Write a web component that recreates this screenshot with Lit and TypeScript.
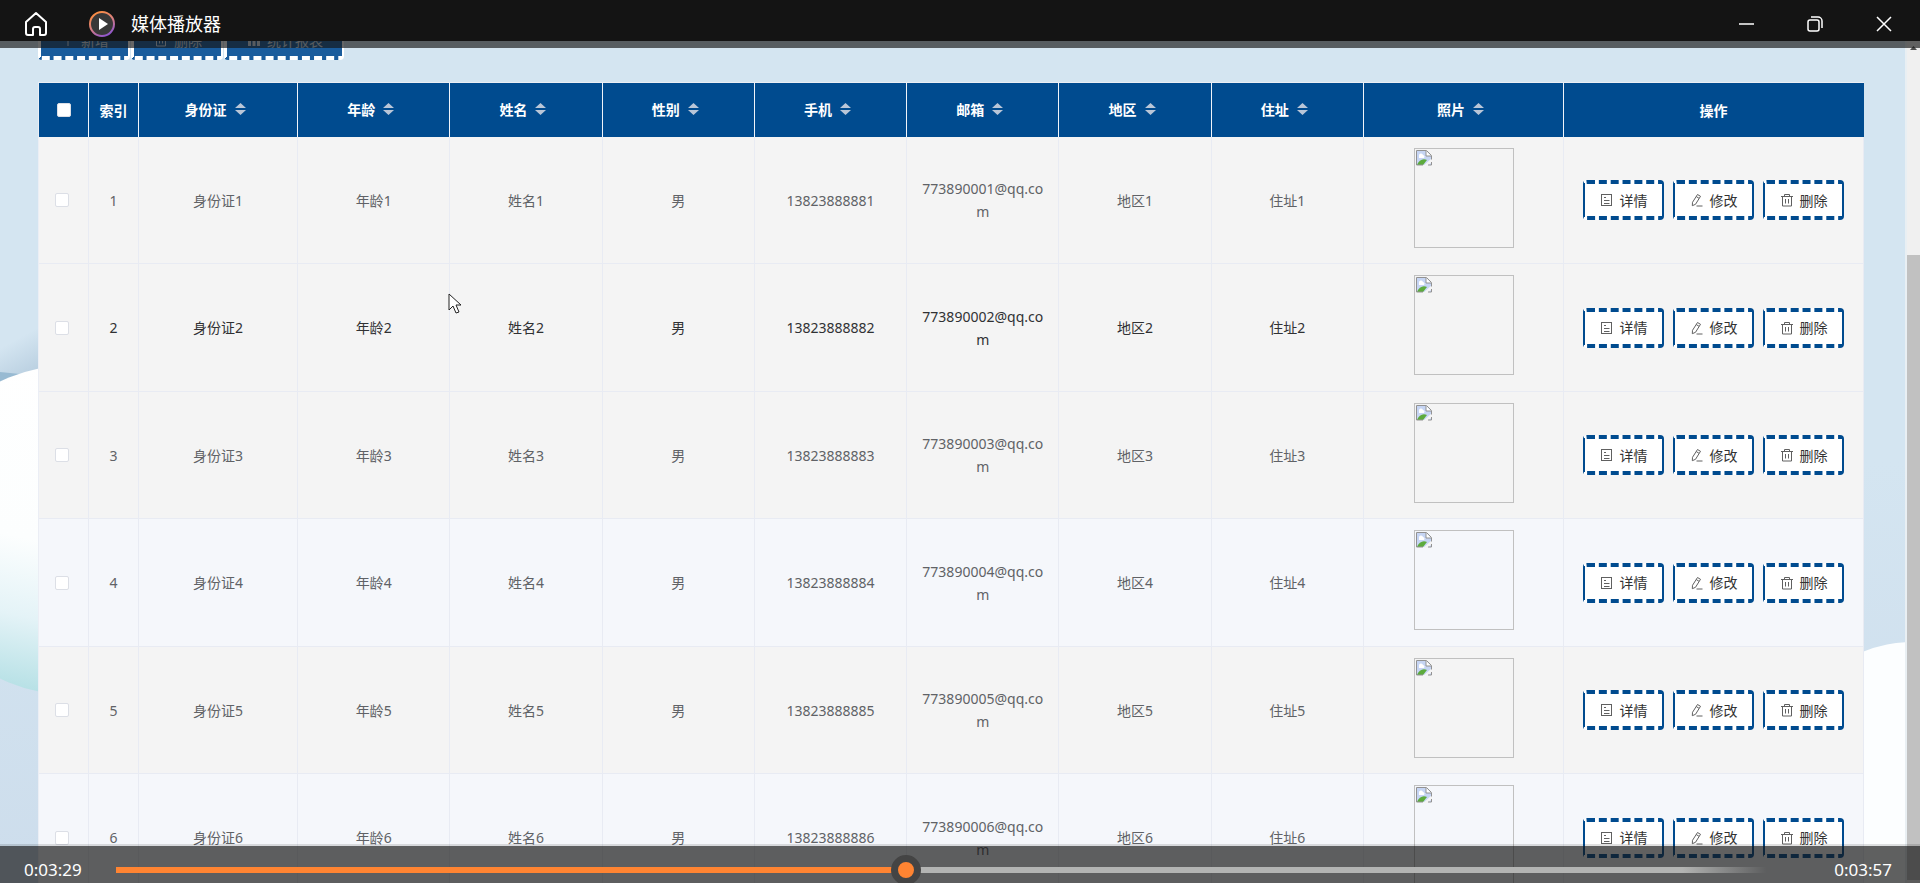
import { LitElement, html, css, svg } from "lit";
import { customElement } from "lit/decorators.js";

interface Person {
  id: number;
  gender: string;
}

const people: Person[] = [1, 2, 3, 4, 5, 6].map((id) => ({ id, gender: "男" }));
const sortable = ["身份证", "年龄", "姓名", "性别", "手机", "邮箱", "地区", "住址", "照片"];

const icons = {
  detail: svg`<rect x="1.5" y="1.5" width="10" height="11"/><path d="M4 4.500h2M4 7.500h5.500M4 10.500h5.500"/>`,
  edit: svg`<path d="M7.500 1.500l3 1.800-5 8-3.200 1.400.2-3.400zM6.300 3.600l2.600 1.600M6.500 13h6"/>`,
  remove: svg`<path d="M1 3.500h12M4.500 3.500v-2h5v2M2.500 3.500v9.500h9v-9.500M5.500 6v4.500M8.500 6v4.500"/>`,
  add: svg`<path d="M7 1v12M1 7h12"/>`,
  chart: svg`<path stroke-width="3" d="M2.500 5v8M7 2v11M11.500 4v9"/>`,
};

const icon = (shape: unknown) => html`<svg class="icon" viewBox="0 0 14 14" aria-hidden="true">${shape}</svg>`;

@customElement("data-page")
class DataPage extends LitElement {
  static styles = css`
    :host {
      display: grid;
      grid-template: minmax(0, 1fr) / minmax(0, 1fr) 15px;
      overflow: hidden;
      background: linear-gradient(#d4e5f1, #d4e5f1 50%, #cdddec);
      color: #606266;
      font: 14px/23px "Noto Sans", "Noto Sans CJK SC", sans-serif;
    }
    .backdrop { grid-area: 1 / 1; display: flex; justify-content: space-between; }
    .backdrop svg { height: 843px; width: 60px; }
    .content { grid-area: 1 / 1; z-index: 1; padding: 0 41px 0 38px; }
    .toolbar { display: flex; height: 19px; align-items: flex-end; gap: 1px; margin-bottom: 22px; }
    button {
      box-sizing: border-box;
      display: inline-flex;
      align-items: center;
      justify-content: center;
      gap: 6px;
      height: 40px;
      border: 2px solid #004b8f;
      border-width: 4px 2px;
      border-style: dashed solid;
      border-radius: 4px;
      background: #fff;
      color: #333;
      font: inherit;
      white-space: nowrap;
    }
    .tool { border-color: #fff; border-left-width: 3px; background: #1a5c9c; color: #d5e0ea; padding: 0 19px 0 20px; }
    .icon { width: 14px; height: 14px; fill: none; stroke: currentColor; stroke-width: 1; flex: none; }
    table { width: 100%; border-collapse: separate; border-spacing: 0; table-layout: fixed; text-align: center; border-left: 1px solid #ebeef5; border-top: 1px solid #ebeef5; }
    .w-small { width: 50px; }
    .w-id { width: 159px; }
    .w-photo { width: 200px; }
    .w-ops { width: 300px; }
    th, td { box-sizing: border-box; padding: 0 12px; border-right: 1px solid #e8ebf3; vertical-align: middle; }
    th { height: 54px; background: #004b8f; border-color: #f0f4fa; color: #fff; font-weight: 700; }
    th:last-child { border-color: #004b8f; }
    .narrow { padding: 0; }
    .label { display: flex; align-items: center; justify-content: center; gap: 8px; padding: 0 6px 2px 0; }
    .sort { width: 11px; height: 12px; fill: #b9c6d8; }
    td { height: 127px; border-bottom: 1px solid #e8ebf3; background: #f4f4f4; word-break: break-all; }
    tr:nth-child(even) td { height: 128px; }
    .striped td { background: #f5f7fb; }
    .hovered td { color: #303133; }
    input { appearance: none; box-sizing: border-box; display: block; width: 14px; height: 14px; margin: 0 auto; border: 1px solid #dcdfe6; border-radius: 2px; background: #fff; }
    .check { padding: 0 4px 0 0; }
    .all { padding: 0; }
    .photo { box-sizing: border-box; display: block; width: 100px; height: 100px; margin: 0 auto 5px; border: 1px solid #c0c0c0; padding: 1px; }
    .photo svg { display: block; width: 16px; height: 16px; }
    .ops { display: flex; justify-content: center; gap: 9px; }
    .ops button { width: 81px; padding: 0; }
    .ops .icon { stroke: #606060; }
    .scroll { grid-area: 1 / 2; display: flex; flex-direction: column; background: #f0f0f0; border-left: 2px solid #e9eff3; }
    .arrow { height: 9px; width: 7px; margin: 0 auto; fill: #505050; }
    .thumb { flex: 1; margin: 205px 0 3px; background: #c1c1c1; }
  `;

  render() {
    return html`
      <div class="backdrop" aria-hidden="true">
        <svg viewBox="0 0 60 843">
          <defs>
            <linearGradient id="ball" x1="0.600" y1="0" x2="0.400" y2="1">
              <stop offset="0" stop-color="#fff"/><stop offset="0.550" stop-color="#fcfefe"/>
              <stop offset="0.780" stop-color="#e4f3f7"/><stop offset="1" stop-color="#b5e0e5"/>
            </linearGradient>
            <linearGradient id="shade" x1="0" y1="0" x2="0.600" y2="1">
              <stop offset="0.300" stop-color="#b4cbdd" stop-opacity="0"/><stop offset="1" stop-color="#b4cbdd"/>
            </linearGradient>
          </defs>
          <path d="M0 285h60v55H0z" fill="url(#shade)"/>
          <path d="M0 331L30 334L0 350z" fill="#98bad2"/>
          <circle cx="72" cy="489" r="165" fill="url(#ball)"/>
        </svg>
        <svg viewBox="0 0 60 843"><circle cx="67" cy="729" r="128" fill="#fcfeff"/></svg>
      </div>
      <div class="content">
        <div class="toolbar">
          <button class="tool">${icon(icons.add)}新增</button>
          <button class="tool">${icon(icons.remove)}删除</button>
          <button class="tool">${icon(icons.chart)}统计报表</button>
        </div>
        <table>
          <colgroup>
            <col class="w-small"><col class="w-small"><col class="w-id">
            <col><col><col><col><col><col><col>
            <col class="w-photo"><col class="w-ops">
          </colgroup>
          <thead>
            <tr>
              <th class="all"><input type="checkbox" aria-label="全选"></th>
              <th class="narrow">索引</th>
              ${sortable.map((name) => html`<th><span class="label">${name}
                <svg class="sort" viewBox="0 0 11 12" aria-hidden="true"><path d="M0 5L5.500 0L11 5zM0 7h11L5.500 12z"/></svg></span></th>`)}
              <th>操作</th>
            </tr>
          </thead>
          <tbody>${people.map((p) => this.row(p))}</tbody>
        </table>
      </div>
      <div class="scroll" aria-hidden="true">
        <svg class="arrow" viewBox="0 0 7 9"><path d="M0 9L3.500 5L7 9z"/></svg>
        <div class="thumb"></div>
      </div>`;
  }

  private row({ id, gender }: Person) {
    const state = id === 2 ? "hovered" : id > 3 && id % 2 === 0 ? "striped" : "";
    return html`
      <tr class=${state}>
        <td class="check"><input type="checkbox" aria-label="选择第${id}行"></td>
        <td class="narrow">${id}</td>
        <td>身份证${id}</td>
        <td>年龄${id}</td>
        <td>姓名${id}</td>
        <td>${gender}</td>
        <td>1382388888${id}</td>
        <td>77389000${id}@qq.com</td>
        <td>地区${id}</td>
        <td>住址${id}</td>
        <td>
          <div class="photo">
            <svg viewBox="0 0 16 16" role="img" aria-label="照片">
              <path d="M1 1h9l5 5v9H1z" fill="#c6d5f4"/>
              <path d="M3 6a2 2 0 0 1 4-1a2 2 0 0 1 1 3H3z" fill="#fff"/>
              <path d="M1 15c2-5 6-7 10-5l-4 5z" fill="#5cab3c"/>
              <path d="M7 16L16 8v4l-4 4z" fill="#f4f4f4"/>
              <path d="M10 1v5h5" fill="#fff" stroke="#929292"/>
              <path d="M7 15H.500V.500h10l5 5v4M12 15h3.500v-3" fill="none" stroke="#929292"/>
            </svg>
          </div>
        </td>
        <td>
          <div class="ops">
            <button>${icon(icons.detail)}详情</button>
            <button>${icon(icons.edit)}修改</button>
            <button>${icon(icons.remove)}删除</button>
          </div>
        </td>
      </tr>`;
  }
}

@customElement("app-root")
class AppRoot extends LitElement {
  static styles = css`
    :host {
      display: grid;
      grid-template: 41px minmax(0, 1fr) / minmax(0, 1fr);
      height: 100vh;
      position: relative;
      overflow: hidden;
      color: #fff;
      font: 18px/24px "Noto Sans", "Noto Sans CJK SC", sans-serif;
    }
    header { display: flex; align-items: center; background: #141414; padding: 7px 24px 0; box-sizing: border-box; z-index: 2; }
    header svg { display: block; fill: none; stroke: #fff; }
    .home, .logo { height: 26px; }
    .home { width: 24px; margin-right: 40px; }
    .logo { width: 28px; margin-right: 15px; }
    h1 { flex: 1; margin: 0; font: inherit; }
    .window { display: flex; gap: 37px; margin-right: -4px; }
    button { width: 32px; height: 32px; padding: 8px; border: 0; background: none; }
    .window svg { width: 16px; height: 16px; stroke-width: 1.500; }
    .edge { position: absolute; left: 0; right: 0; top: 41px; height: 7px; background: rgba(20, 20, 20, 0.65); z-index: 2; }
    footer {
      position: absolute; left: 0; right: 0; bottom: 0; z-index: 2;
      box-sizing: border-box; height: 39px; padding: 11px 28px 0 24px;
      border-top: 2px solid rgba(0, 0, 0, 0.120);
      display: flex; align-items: center; gap: 34px;
      background: rgba(20, 20, 20, 0.680); background-clip: padding-box;
      font-size: 17px;
    }
    input {
      appearance: none; flex: 1; min-width: 0; height: 30px; margin: 0; border-radius: 3px;
      background: linear-gradient(90deg, #ff8432 47%, #b3b4b3 47%, #b3b4b3 93%, transparent 98%) center / 100% 6px no-repeat;
    }
    input::-webkit-slider-thumb { appearance: none; box-sizing: border-box; width: 30px; height: 30px; border: 7px solid #444; border-radius: 50%; background: #ff8432; }
    .cursor { position: absolute; left: 448px; top: 293px; width: 14px; height: 21px; z-index: 1; fill: #fff; stroke: #222; }
  `;

  render() {
    return html`
      <header>
        <svg class="home" viewBox="0 0 24 26" stroke-width="2" stroke-linejoin="round">
          <path d="M2 11L12 2l10 9v11a2 2 0 0 1-2 2h-4v-6a2 2 0 0 0-2-2h-3a2 2 0 0 0-2 2v6H4a2 2 0 0 1-2-2z"/>
        </svg>
        <svg class="logo" viewBox="0 0 28 26">
          <defs><linearGradient id="ring" x1="0.200" y1="0" x2="0.700" y2="1">
            <stop offset="0" stop-color="#ff8e3c"/><stop offset="0.500" stop-color="#d98080"/><stop offset="1" stop-color="#8d55d0"/>
          </linearGradient></defs>
          <circle cx="14" cy="13" r="12" fill="#383838" stroke="url(#ring)" stroke-width="2"/>
          <path d="M11 7v12l9-6z" fill="#fff" stroke="none"/>
        </svg>
        <h1>媒体播放器</h1>
        <div class="window">
          <button aria-label="最小化"><svg viewBox="0 0 16 16"><path d="M1 8h15"/></svg></button>
          <button aria-label="还原"><svg viewBox="0 0 16 16"><rect x="1" y="4" width="11" height="11" rx="2"/><path d="M4 1h7a4 4 0 0 1 4 4v7"/></svg></button>
          <button aria-label="关闭"><svg viewBox="0 0 16 16"><path d="M1 1l14 14M15 1L1 15"/></svg></button>
        </div>
      </header>
      <data-page></data-page>
      <div class="edge"></div>
      <svg class="cursor" viewBox="0 0 14 21" aria-hidden="true"><path d="M1 1v16l4-4 3 7 3-1-3-7h5z"/></svg>
      <footer>
        <time>0:03:29</time>
        <input type="range" min="0" max="446" .value=${"209"} aria-label="播放进度">
        <time>0:03:57</time>
      </footer>`;
  }
}
